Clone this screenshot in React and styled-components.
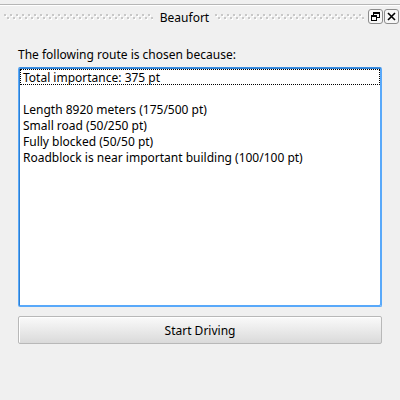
import React from "react";
import styled, { createGlobalStyle } from "styled-components";

const Global = createGlobalStyle`
  * { box-sizing: border-box; }
  html, body { margin: 0; background: #f0f0f0; }
  body, button { font: 12px/16px "Noto Sans", "Open Sans", sans-serif; color: #000; }
`;

const Panel = styled.section`
  min-height: 100vh;
  padding-top: 4px;
`;

const TitleBar = styled.header`
  display: flex;
  align-items: center;
  height: 24px;
  padding: 0 1px 0 4px;
  border-top: 1px solid #b6b6b6;
  box-shadow: inset 0 1px #fff;
`;

const Title = styled.h1`
  margin: 0;
  padding: 2px 6px 0 7px;
  font-size: 12px;
  font-weight: 400;
`;

const GripArea = styled.svg`
  flex: 1;
  min-width: 0;
  height: 6px;
`;

const WindowControls = styled.div`
  display: flex;
  gap: 1px;
  margin-left: 4px;
`;

const ControlButton = styled.button`
  display: grid;
  place-items: center;
  width: 15px;
  height: 15px;
  padding: 0;
  border: 1px solid #8c8c8c;
  border-radius: 3px;
  background: #f7f7f7;
`;

const Content = styled.main`
  padding: 19px 18px;
`;

const Caption = styled.h2`
  margin: 0 0 4px;
  font-size: 12px;
  font-weight: 400;
`;

const Reasons = styled.ul`
  height: calc(100vh - 160px);
  min-height: 120px;
  margin: 0 0 9px;
  padding: 1px;
  list-style: none;
  overflow: auto;
  background: #fff;
  border: 1px solid #59a9fa;
  border-top-color: #3d8fe2;
  border-radius: 2px;
  box-shadow: inset 1px 1px #2f7fd0, inset -1px -1px #59a9fa;
  outline: none;
`;

const Reason = styled.li`
  height: 16px;
  padding: 0 2px;
  border: 1px dotted ${(p) => (p.$current ? "#000" : "transparent")};
  border-width: ${(p) => (p.$current ? "1px" : "0 1px")};
  line-height: ${(p) => (p.$current ? "16px" : "18px")};
  white-space: nowrap;
`;

const StartButton = styled.button`
  display: block;
  width: 100%;
  height: 28px;
  padding: 2px 0 0;
  border: 1px solid #b8b8b8;
  border-radius: 2px;
  background: linear-gradient(#fafafa, #dadada);
  box-shadow: inset 1px 1px #fff;
`;

function Grip({ id }) {
  return (
    <GripArea aria-hidden="true" shapeRendering="crispEdges">
      <defs>
        <pattern id={id} width="6" height="6" patternUnits="userSpaceOnUse">
          <path fill="#fff" d="M1 1h2v2H1zM4 4h2v2H4z" />
          <path fill="#c8c8c8" d="M0 0h2v2H0zM3 3h2v2H3z" />
        </pattern>
      </defs>
      <rect width="100%" height="6" fill={`url(#${id})`} />
    </GripArea>
  );
}

const reasons = [
  "Total importance: 375 pt",
  "",
  "Length 8920 meters (175/500 pt)",
  "Small road (50/250 pt)",
  "Fully blocked (50/50 pt)",
  "Roadblock is near important building (100/100 pt)",
];

export default function App() {
  return (
    <>
      <Global />
      <Panel>
        <TitleBar>
          <Grip id="grip-left" />
          <Title>Beaufort</Title>
          <Grip id="grip-right" />
          <WindowControls>
            <ControlButton type="button" aria-label="Float">
              <svg width="9" height="9" shapeRendering="crispEdges" fill="none" stroke="#000">
                <path d="M2.5 3V.5h6v5H6M2 1.5h7M.5 3.5h5v5h-5zM0 4.5h6" />
              </svg>
            </ControlButton>
            <ControlButton type="button" aria-label="Close">
              <svg width="9" height="9" fill="none" stroke="#000" strokeWidth="1.6">
                <path d="M1 1l7 7M8 1L1 8" />
              </svg>
            </ControlButton>
          </WindowControls>
        </TitleBar>
        <Content>
          <Caption id="reasons-caption">The following route is chosen because:</Caption>
          <Reasons aria-labelledby="reasons-caption" tabIndex={0}>
            {reasons.map((text, i) => (
              <Reason key={i} $current={i === 0}>{text}</Reason>
            ))}
          </Reasons>
          <StartButton type="button">Start Driving</StartButton>
        </Content>
      </Panel>
    </>
  );
}
